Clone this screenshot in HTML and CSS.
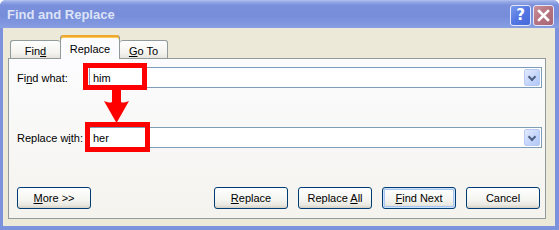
FILE: index.html
```html
<!DOCTYPE html>
<html>
<head lang="en">
    <meta charset="UTF-8">
    <title>Find and Replace</title>
<link rel="stylesheet" href="styles.css">
</head>
<body>
<div class="window">
    <div class="titlebar">
        <span class="title">Find and Replace</span>
        <div class="caption">
            <span class="cbtn help">?</span>
            <span class="cbtn close">
                <svg width="13" height="13" viewBox="0 0 13 13"><path d="M2 2 L11 11 M11 2 L2 11" stroke="#fff" stroke-width="2.6" stroke-linecap="square"/></svg>
            </span>
        </div>
    </div>
    <div class="client">
        <div class="tabs">
            <div class="tab tab_find">Fin<u>d</u></div>
            <div class="tab active">Replace</div>
            <div class="tab tab_goto"><u>G</u>o To</div>
        </div>
        <div class="panel">
            <div class="row">
                <label>Fi<u>n</u>d what:</label>
                <div class="combo"><span class="val">him</span><span class="drop"></span></div>
            </div>
            <div class="row row_2">
                <label>Replace w<u>i</u>th:</label>
                <div class="combo"><span class="val">her</span><span class="drop"></span></div>
            </div>
            <div class="buttons">
                <button><u>M</u>ore &gt;&gt;</button>
                <div class="btn_group">
                    <button><u>R</u>eplace</button>
                    <button>Replace <u>A</u>ll</button>
                    <button class="default"><u>F</u>ind Next</button>
                    <button>Cancel</button>
                </div>
            </div>
        </div>
    </div>
    <!-- red annotations drawn over the dialog -->
    <div class="mark mark_1"></div>
    <div class="mark mark_2"></div>
    <svg class="arrow" width="28" height="38" viewBox="0 0 28 38">
        <path d="M9 0 H18 V13 C18 15 20 15 26 13 L13.5 35 L1 13 C7 15 9 15 9 13 Z" fill="#ff0000"/>
    </svg>
</div>
</body>
</html>
```

FILE: styles.css
```css
body {
	margin: 0;
	background-color: #fff;
	font-family: "Liberation Sans", Arial, sans-serif;
	font-size: 11px;
	color: #000;
}
.window {
	position: relative;
	width: 559px;
	height: 230px;
	box-sizing: border-box;
	padding: 0 4px 4px 3px;
	background-color: #7d92dc;
	border-radius: 6px 6px 0 0;
	display: flex;
	flex-direction: column;
}
.titlebar {
	height: 28px;
	margin: 0 -4px 0 -3px;
	padding: 0 5px 0 7px;
	border-radius: 6px 6px 0 0;
	background: linear-gradient(#b3c1ee 0, #94a8e6 2px, #7b90dc 5px, #778dda 16px, #8198e0 24px, #8a9fe3 28px);
	display: flex;
	align-items: center;
	justify-content: space-between;
}
.title {
	color: #dce3f7;
	font-weight: bold;
	font-size: 13px;
	margin-top: 1px;
}
.caption {
	display: flex;
	gap: 2px;
	margin-top: 2px;
}
.cbtn {
	width: 19px;
	height: 19px;
	border: 1px solid #e4e9fa;
	border-radius: 3px;
	display: flex;
	align-items: center;
	justify-content: center;
	color: #fff;
	font-family: "DejaVu Sans", sans-serif;
	font-weight: bold;
	font-size: 15px;
}
.help {
	background: linear-gradient(135deg, #7a9aec, #5476e2 50%, #4669da);
}
.close {
	background: linear-gradient(135deg, #c9909b, #b5727f 50%, #a86674);
}
.client {
	flex: 1;
	background-color: #ece9d8;
	padding: 7px 0 0 5px;
}
.tabs {
	display: flex;
	align-items: flex-end;
	height: 24px;
	margin: 0 0 -1px 2px;
	position: relative;
	z-index: 1;
}
.tab {
	height: 19px;
	box-sizing: border-box;
	border: 1px solid #919b9c;
	border-radius: 3px 3px 0 0;
	background: linear-gradient(#fefefe, #f4f3ee 70%, #e6e4dc);
	text-align: center;
	line-height: 18px;
	padding-top: 1px;
}
.tab_find {
	width: 50px;
	border-right: none;
}
.tab_goto {
	width: 48px;
	border-left: none;
}
.tab.active {
	width: 60px;
	height: 24px;
	border-bottom: none;
	border-top: none;
	background: #fcfcfe;
	box-shadow: inset 0 2px 0 #f0a830, inset 0 3px 0 #fbcb5a;
	padding-top: 5px;
}
.panel {
	width: 538px;
	height: 161px;
	box-sizing: border-box;
	border: 1px solid #919b9c;
	background: linear-gradient(#fcfcfe, #f4f3ee);
	padding: 8px 3px 0 8px;
	display: flex;
	flex-direction: column;
}
.row {
	display: flex;
	align-items: center;
	height: 21px;
}
.row_2 {
	margin-top: 39px;
}
.row label {
	width: 72px;
}
.combo {
	flex: 1;
	height: 21px;
	box-sizing: border-box;
	border: 1px solid #7f9db9;
	background-color: #fff;
	display: flex;
	align-items: center;
	justify-content: space-between;
	padding: 0 1px 0 3px;
}
.drop {
	width: 16px;
	height: 17px;
	box-sizing: border-box;
	border: 1px solid #b9cbf3;
	border-radius: 2px;
	background: linear-gradient(135deg, #e2ebfe, #c3d4fb 60%, #b2c7f6);
	position: relative;
}
.drop::after {
	content: "";
	position: absolute;
	left: 4px;
	top: 4px;
	width: 4px;
	height: 4px;
	border-right: 2px solid #4d6185;
	border-bottom: 2px solid #4d6185;
	transform: rotate(45deg);
}
.buttons {
	margin-top: 39px;
	padding-right: 2px;
	display: flex;
	justify-content: space-between;
}
.btn_group {
	display: flex;
	gap: 10px;
}
button {
	width: 74px;
	height: 22px;
	border: 1px solid #003c74;
	border-radius: 3px;
	background: linear-gradient(#ffffff, #f4f4f0 60%, #e9e8e1 85%, #d6d0c5);
	font-family: "Liberation Sans", Arial, sans-serif;
	font-size: 11px;
	color: #000;
	padding: 0;
}
button.default {
	box-shadow: inset 0 0 0 1px #cde3fc, inset 0 0 0 2px #a8c4f0;
}
.mark {
	position: absolute;
	border: 5px solid #ff0000;
	box-sizing: border-box;
}
.mark_1 {
	left: 83px;
	top: 63px;
	width: 64px;
	height: 27px;
}
.mark_2 {
	left: 85px;
	top: 122px;
	width: 65px;
	height: 30px;
}
.arrow {
	position: absolute;
	left: 103px;
	top: 88px;
}
```
